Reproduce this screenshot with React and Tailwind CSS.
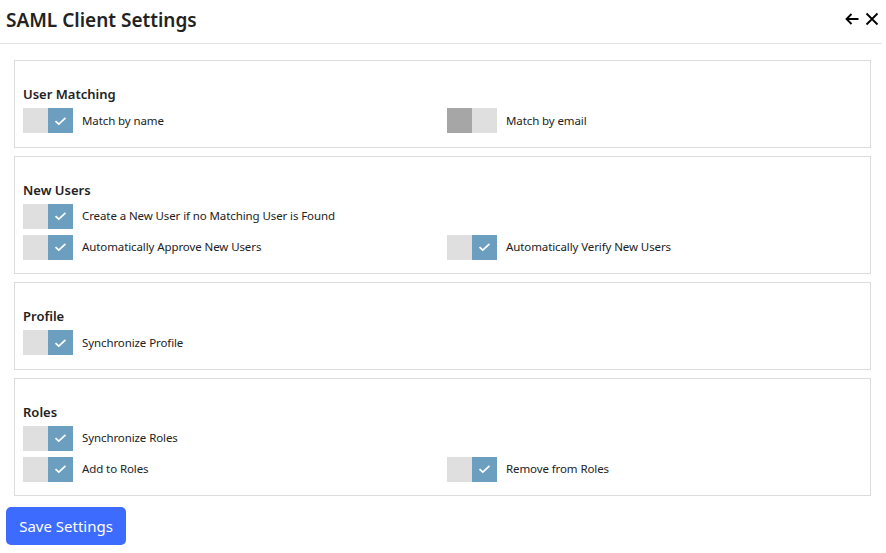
import React, { useState } from 'react';

const Toggle = ({ on, onClick }) => (
    <button
        type="button"
        onClick={onClick}
        className="flex h-[25px] w-[50px] shrink-0"
    >
        {on ? (
            <>
                <span className="h-full w-[25px] bg-[#dfdfdf]" />
                <span className="flex h-full w-[25px] items-center justify-center bg-[#6c9fbf]">
                    <svg width="13" height="10" viewBox="0 0 13 10" fill="none">
                        <path d="M1.5 5.2 L4.8 8.2 L11.5 1.8" stroke="white" strokeWidth="1.7" />
                    </svg>
                </span>
            </>
        ) : (
            <>
                <span className="h-full w-[25px] bg-[#a6a6a6]" />
                <span className="h-full w-[25px] bg-[#dfdfdf]" />
            </>
        )}
    </button>
);

const Option = ({ label, on, onClick }) => (
    <div className="flex h-[25px] items-center gap-[9px] pl-2">
        <Toggle on={on} onClick={onClick} />
        <span className="text-[11.5px] leading-[16px] tracking-[-0.1px] text-[#222]">{label}</span>
    </div>
);

const Section = ({ title, rows, state, toggle }) => (
    <section className="border border-[#dcdcdc] pt-[23px] pb-[13.5px]">
        <h3 className="pl-2 text-[13px] font-semibold leading-[20px] text-[#222] mb-[4px]">{title}</h3>
        <div className="flex flex-col gap-[6px]">
            {rows.map((row, i) => (
                <div key={i} className="grid grid-cols-[424px_1fr]">
                    {row.map((key) =>
                        key ? (
                            <Option key={key} label={key} on={state[key]} onClick={() => toggle(key)} />
                        ) : (
                            <div key={'empty' + i} />
                        )
                    )}
                </div>
            ))}
        </div>
    </section>
);

const App = () => {
    const [state, setState] = useState({
        'Match by name': true,
        'Match by email': false,
        'Create a New User if no Matching User is Found': true,
        'Automatically Approve New Users': true,
        'Automatically Verify New Users': true,
        'Synchronize Profile': true,
        'Synchronize Roles': true,
        'Add to Roles': true,
        'Remove from Roles': true,
    });

    const toggle = (key) => setState((s) => ({ ...s, [key]: !s[key] }));

    return (
        <main className="min-h-screen w-[886px] bg-white" style={{ fontFamily: '"Noto Sans", "Open Sans", sans-serif' }}>
            <header className="mr-[4px] flex h-[44px] items-center justify-between border-b border-[#e2e2e2] pl-[6px] pr-[2px]">
                <h1 className="text-[19px] font-semibold text-[#222] pb-[2px]">SAML Client Settings</h1>
                <div className="flex items-center gap-[4px] pb-[6px]">
                    <svg width="16" height="16" viewBox="0 0 16 16" fill="none">
                        <path d="M14.5 8 H2.5 M7.5 3 L2.5 8 L7.5 13" stroke="black" strokeWidth="1.8" />
                    </svg>
                    <svg width="16" height="16" viewBox="0 0 16 16" fill="none">
                        <path d="M2.5 2.5 L13.5 13.5 M13.5 2.5 L2.5 13.5" stroke="black" strokeWidth="1.8" />
                    </svg>
                </div>
            </header>

            <div className="ml-[14px] mr-[15px] mt-[16px] flex flex-col gap-[8px]">
                <Section
                    title="User Matching"
                    rows={[['Match by name', 'Match by email']]}
                    state={state}
                    toggle={toggle}
                />
                <Section
                    title="New Users"
                    rows={[
                        ['Create a New User if no Matching User is Found', null],
                        ['Automatically Approve New Users', 'Automatically Verify New Users'],
                    ]}
                    state={state}
                    toggle={toggle}
                />
                <Section
                    title="Profile"
                    rows={[['Synchronize Profile', null]]}
                    state={state}
                    toggle={toggle}
                />
                <Section
                    title="Roles"
                    rows={[
                        ['Synchronize Roles', null],
                        ['Add to Roles', 'Remove from Roles'],
                    ]}
                    state={state}
                    toggle={toggle}
                />
            </div>

            <div className="ml-[6px] mt-[11px]">
                <button className="h-[38px] w-[120px] rounded-[5px] bg-[#3d6bfd] text-[15px] text-white">
                    Save Settings
                </button>
            </div>
        </main>
    );
};

export default App;
